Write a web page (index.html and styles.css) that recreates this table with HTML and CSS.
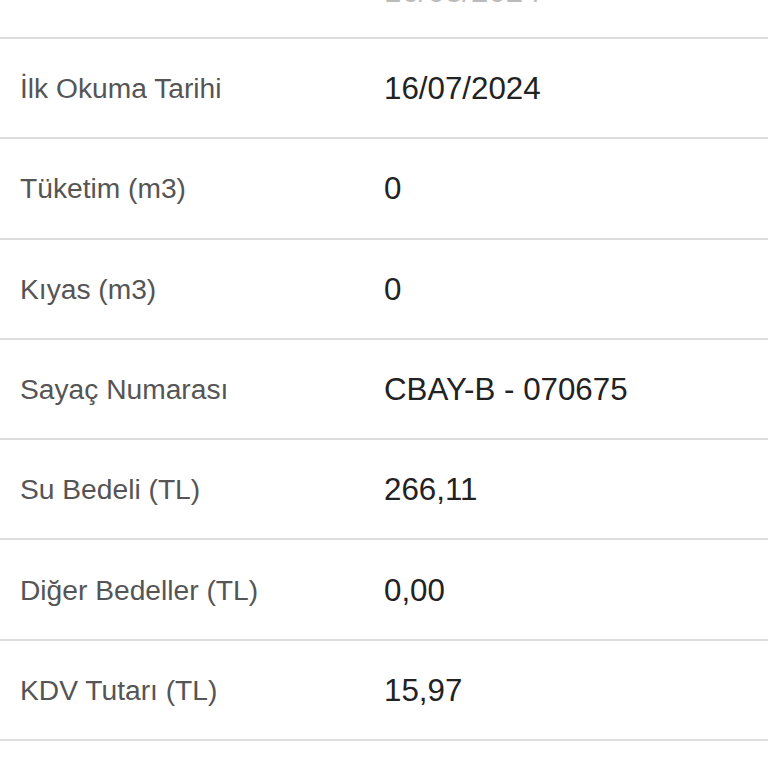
FILE: index.html
```html
<!DOCTYPE html>
<html lang="tr">
<head>
<meta charset="utf-8">
<title>Fatura Detayı</title>
<link rel="stylesheet" href="styles.css">
</head>
<body>
<div class="table">
  <div class="row row-cut">
    <div class="label"></div>
    <div class="value">16/08/2024</div>
  </div>
  <div class="row">
    <div class="label">İlk Okuma Tarihi</div>
    <div class="value">16/07/2024</div>
  </div>
  <div class="row">
    <div class="label">Tüketim (m3)</div>
    <div class="value">0</div>
  </div>
  <div class="row">
    <div class="label">Kıyas (m3)</div>
    <div class="value">0</div>
  </div>
  <div class="row">
    <div class="label">Sayaç Numarası</div>
    <div class="value">CBAY-B - 070675</div>
  </div>
  <div class="row">
    <div class="label">Su Bedeli (TL)</div>
    <div class="value">266,11</div>
  </div>
  <div class="row">
    <div class="label">Diğer Bedeller (TL)</div>
    <div class="value">0,00</div>
  </div>
  <div class="row">
    <div class="label">KDV Tutarı (TL)</div>
    <div class="value">15,97</div>
  </div>
</div>
</body>
</html>
```
FILE: styles.css
```css
html, body {
  margin: 0;
  padding: 0;
  background: #ffffff;
  overflow: hidden;
}
body {
  font-family: "Liberation Sans", Arial, Helvetica, sans-serif;
}
.table {
  display: flex;
  flex-direction: column;
  margin-top: -63px;
}
.row {
  display: grid;
  grid-template-columns: 364px 1fr;
  align-items: center;
  padding-left: 20px;
  height: 98.3px;
  border-bottom: 2px solid #dddddd;
}
.row-cut {
  height: 100px;
  align-items: end;
}
.row-cut .value {
  line-height: 31px;
  padding-bottom: 30px;
  color: #bbbbbb;
}
.label {
  font-size: 28.2px;
  color: #555555;
  padding-top: 1px;
}
.value {
  font-size: 31.3px;
  color: #222222;
  padding-top: 2px;
}
```
